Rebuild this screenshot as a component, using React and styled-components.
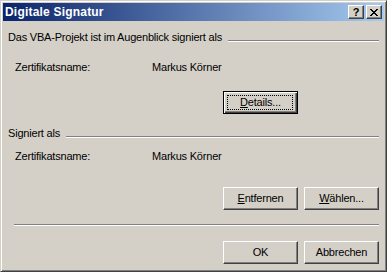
import React from 'react';
import styled, { createGlobalStyle, css } from 'styled-components';

const GlobalStyle = createGlobalStyle`
  html, body {
    margin: 0;
    padding: 0;
    background: #d4d0c8;
  }
  body {
    font-family: 'Liberation Sans', Arial, sans-serif;
    font-size: 11px;
    letter-spacing: -0.2px;
    color: #000;
  }
`;

const face = '#d4d0c8';

const Window = styled.div`
  box-sizing: border-box;
  width: 387px;
  height: 272px;
  display: flex;
  flex-direction: column;
  background: ${face};
  border: 1px solid;
  border-color: ${face} #404040 #404040 ${face};
  box-shadow: inset 1px 1px #fff, inset -1px -1px #808080;
  padding: 2px;
`;

const TitleBar = styled.div`
  height: 18px;
  display: flex;
  align-items: center;
  justify-content: space-between;
  padding: 0 2px 0 2px;
  background: linear-gradient(to right, #0a246a, #a6caf0);
`;

const Title = styled.span`
  color: #fff;
  font-weight: bold;
  font-size: 12px;
  letter-spacing: 0.2px;
  line-height: 14px;
`;

const Controls = styled.div`
  display: flex;
  gap: 2px;
`;

const CapButton = styled.div`
  box-sizing: border-box;
  width: 16px;
  height: 14px;
  display: flex;
  align-items: center;
  justify-content: center;
  background: ${face};
  border: 1px solid;
  border-color: #fff #404040 #404040 #fff;
  box-shadow: inset -1px -1px #808080;
  font-weight: bold;
  font-size: 11px;
  line-height: 11px;
`;

const Body = styled.div`
  flex: 1;
  display: flex;
  flex-direction: column;
  padding: 0 5px 0 5px;
`;

const GroupHeader = styled.div`
  display: flex;
  align-items: flex-start;
  line-height: 13px;
  margin-top: ${(p) => p.$top}px;

  &::after {
    content: '';
    flex: 1;
    margin: 9px 0 0 6px;
    border-top: 1px solid #808080;
    border-bottom: 1px solid #fff;
  }
`;

const InfoRow = styled.div`
  display: grid;
  grid-template-columns: 137px 1fr;
  padding-left: 7px;
  line-height: 13px;
  margin-top: ${(p) => p.$top}px;
`;

const ButtonRow = styled.div`
  display: grid;
  grid-template-columns: 75px 75px;
  justify-content: end;
  column-gap: 6px;
  margin-top: ${(p) => p.$top}px;
`;

const Button = styled.div`
  box-sizing: border-box;
  height: 23px;
  display: flex;
  align-items: center;
  justify-content: center;
  background: ${face};
  border: 1px solid;
  border-color: #fff #404040 #404040 #fff;
  box-shadow: inset -1px -1px #808080;
  line-height: 13px;
  position: relative;

  ${(p) =>
    p.$default &&
    css`
      border-color: #000;
      box-shadow: inset 1px 1px #fff, inset -1px -1px #404040, inset -2px -2px #808080;

      &::before {
        content: '';
        position: absolute;
        inset: 3px 4px 3px 3px;
        border: 1px dotted #000;
      }
    `}
`;

const Key = styled.span`
  text-decoration: underline;
`;

const Separator = styled.div`
  margin: ${(p) => p.$top}px 0 0 6px;
  border-top: 1px solid #808080;
  border-bottom: 1px solid #fff;
`;

const CloseGlyph = () => (
  <svg width="8" height="7" viewBox="0 0 8 7" shapeRendering="crispEdges">
    <path d="M0 0h2v1H0zM6 0h2v1H6zM1 1h2v1H1zM5 1h2v1H5zM2 2h4v1H2zM3 3h2v1H3zM2 4h4v1H2zM1 5h2v1H1zM5 5h2v1H5zM0 6h2v1H0zM6 6h2v1H6z" fill="#000" />
  </svg>
);

export default function App() {
  return (
    <>
      <GlobalStyle />
      <Window>
        <TitleBar>
          <Title>Digitale Signatur</Title>
          <Controls>
            <CapButton>?</CapButton>
            <CapButton>
              <CloseGlyph />
            </CapButton>
          </Controls>
        </TitleBar>
        <Body>
          <GroupHeader $top={10}>Das VBA-Projekt ist im Augenblick signiert als</GroupHeader>
          <InfoRow $top={17}>
            <span>Zertifikatsname:</span>
            <span>Markus Körner</span>
          </InfoRow>
          <ButtonRow $top={17}>
            <Button $default>
              <span>
                <Key>D</Key>etails...
              </span>
            </Button>
          </ButtonRow>
          <GroupHeader $top={13}>Signiert als</GroupHeader>
          <InfoRow $top={10}>
            <span>Zertifikatsname:</span>
            <span>Markus Körner</span>
          </InfoRow>
          <ButtonRow $top={24}>
            <Button>
              <span>
                <Key>E</Key>ntfernen
              </span>
            </Button>
            <Button>
              <span>
                <Key>W</Key>ählen...
              </span>
            </Button>
          </ButtonRow>
          <Separator $top={14} />
          <ButtonRow $top={15}>
            <Button>OK</Button>
            <Button>Abbrechen</Button>
          </ButtonRow>
        </Body>
      </Window>
    </>
  );
}
